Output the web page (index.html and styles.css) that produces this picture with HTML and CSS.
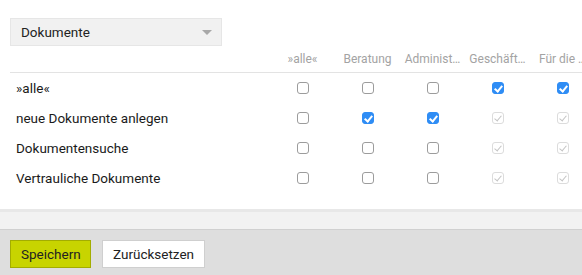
FILE: index.html
```html
<!DOCTYPE html>
<html lang="de">
<head>
	<meta charset="UTF-8">
	<title>Rechte</title>
	<link rel="stylesheet" href="styles.css">
</head>
<body>
	<div class="panel">
		<div class="select">
			<span>Dokumente</span>
			<span class="arrow"></span>
		</div>
		<table class="rights">
			<thead>
				<tr>
					<th class="label"></th>
					<th>»alle«</th>
					<th>Beratung</th>
					<th>Administ…</th>
					<th>Geschäft…</th>
					<th>Für die …</th>
				</tr>
			</thead>
			<tbody>
				<tr>
					<td class="label">»alle«</td>
					<td><i class="cb"></i></td>
					<td><i class="cb"></i></td>
					<td><i class="cb"></i></td>
					<td><i class="cb on"></i></td>
					<td><i class="cb on"></i></td>
				</tr>
				<tr>
					<td class="label">neue Dokumente anlegen</td>
					<td><i class="cb"></i></td>
					<td><i class="cb on"></i></td>
					<td><i class="cb on"></i></td>
					<td><i class="cb off"></i></td>
					<td><i class="cb off"></i></td>
				</tr>
				<tr>
					<td class="label">Dokumentensuche</td>
					<td><i class="cb"></i></td>
					<td><i class="cb"></i></td>
					<td><i class="cb"></i></td>
					<td><i class="cb off"></i></td>
					<td><i class="cb off"></i></td>
				</tr>
				<tr>
					<td class="label">Vertrauliche Dokumente</td>
					<td><i class="cb"></i></td>
					<td><i class="cb"></i></td>
					<td><i class="cb"></i></td>
					<td><i class="cb off"></i></td>
					<td><i class="cb off"></i></td>
				</tr>
			</tbody>
		</table>
	</div>
	<div class="strip"></div>
	<div class="actions">
		<button class="btn save">Speichern</button>
		<button class="btn">Zurücksetzen</button>
	</div>
</body>
</html>
```

FILE: styles.css
```css
html,body{margin: 0; padding: 0; overflow: hidden;}
body{font-family: Roboto, "Liberation Sans", sans-serif; font-size: 13.5px; color: #222; background: #fff; width: 582px;}
.panel{padding: 18px 0 16px 10px;}
.select{width: 190px; height: 26px; padding: 0 10px 0 10px; background: #f1f1f1; border: 1px solid #e6e6e6; display: flex; align-items: center; justify-content: space-between; font-size: 13.5px; color: #222;}
.arrow{width: 0; height: 0; border-left: 5px solid transparent; border-right: 5px solid transparent; border-top: 5px solid #a8a8a8; margin-right: -1px;}
.rights{border-collapse: collapse; table-layout: fixed; width: 585px; margin-top: 2px;}
.rights th{height: 18px; padding: 0 0 6px 0; font-weight: normal; font-size: 12px; color: #a3a3a3; vertical-align: bottom; border-bottom: 1px solid #e3e3e3; text-align: center; white-space: nowrap;}
.rights th.label{width: 260px;}
.rights td{height: 30px; padding: 0; text-align: center; vertical-align: middle;}
.rights td.label{text-align: left; padding-left: 6px; font-size: 13.5px; color: #1a1a1a;}
.cb{display: block; margin: 0 auto; width: 10px; height: 10px; border: 1px solid #9c9c9c; border-radius: 3px; background: #fff; position: relative;}
.cb.on{background: #2f8df5; border-color: #2f8df5;}
.cb.on:after, .cb.off:after{content: ''; position: absolute; left: 3px; top: 1px; width: 3px; height: 6px; border: solid #fff; border-width: 0 2px 2px 0; transform: rotate(40deg);}
.cb.off{border-color: #dcdcdc;}
.cb.off:after{border-color: #c4c4c4; border-width: 0 1px 1px 0;}
.strip{height: 17px; background: #f2f2f2; border-top: 3px solid #e8e8e8; border-bottom: 1px solid #d0d0d0;}
.actions{background: #dedede; padding: 10px 10px 7px 10px; display: flex; gap: 11px;}
.btn{font-family: Roboto, "Liberation Sans", sans-serif; font-size: 13.5px; height: 28px; padding: 0 10px; border: 1px solid #cfcfcf; background: #fff; color: #222;}
.save{background: #c8d400; border-color: #a3ad00; width: 81px;}
```
